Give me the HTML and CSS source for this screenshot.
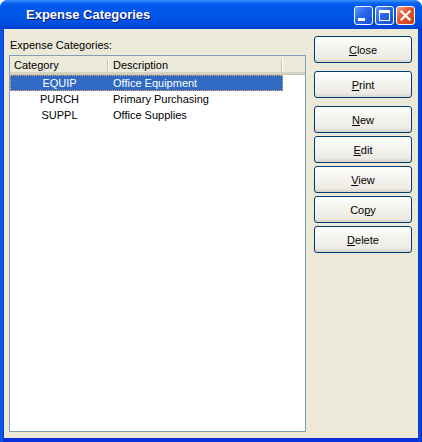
FILE: index.html
```html
<!DOCTYPE html>
<html>
<head>
<meta charset="utf-8">
<link rel="stylesheet" href="styles.css">
</head>
<body>
<div class="window">
  <div class="titlebar">
    <span class="title">Expense Categories</span>
    <div class="controls">
      <span class="tb blue"><svg width="17" height="17" viewBox="0 0 17 17"><rect x="3" y="11" width="7" height="3" fill="#fff"/></svg></span>
      <span class="tb blue"><svg width="17" height="17" viewBox="0 0 17 17"><rect x="3.5" y="3.5" width="10" height="10" fill="none" stroke="#fff" stroke-width="1"/><rect x="3" y="3" width="11" height="3" fill="#fff"/></svg></span>
      <span class="tb red"><svg width="17" height="17" viewBox="0 0 17 17"><path d="M4.5 4.5 L12.5 12.5 M12.5 4.5 L4.5 12.5" stroke="#fff" stroke-width="2.2" stroke-linecap="square"/></svg></span>
    </div>
  </div>
  <div class="client">
    <div class="left">
      <div class="label">Expense Categories:</div>
      <div class="list">
        <div class="header">
          <div class="hcell cat">Category</div>
          <div class="hcell desc">Description</div>
          <div class="hcell fill"></div>
        </div>
        <div class="row sel"><span class="c1">EQUIP</span><span class="c2">Office Equipment</span></div>
        <div class="row"><span class="c1">PURCH</span><span class="c2">Primary Purchasing</span></div>
        <div class="row"><span class="c1">SUPPL</span><span class="c2">Office Supplies</span></div>
      </div>
    </div>
    <div class="buttons">
      <button class="btn sep"><u>C</u>lose</button>
      <button class="btn sep"><u>P</u>rint</button>
      <button class="btn"><u>N</u>ew</button>
      <button class="btn"><u>E</u>dit</button>
      <button class="btn"><u>V</u>iew</button>
      <button class="btn">Co<u>p</u>y</button>
      <button class="btn"><u>D</u>elete</button>
    </div>
  </div>
</div>
</body>
</html>
```
FILE: styles.css
```css
html, body {
  margin: 0;
  padding: 0;
  background: #ffffff;
}
body {
  font-family: "Liberation Sans", Arial, sans-serif;
  font-size: 11px;
  color: #000;
}
.window {
  width: 422px;
  height: 442px;
  box-sizing: border-box;
  display: flex;
  flex-direction: column;
  background: linear-gradient(to right, #0831D9 0, #166AEE 1px, #0855DD 2px, #0831D9 4px, #0831D9 418px, #0855DD 420px, #001EA0 422px);
  border-radius: 8px 8px 0 0;
  overflow: hidden;
}
.titlebar {
  height: 29px;
  flex: none;
  display: flex;
  align-items: flex-start;
  background: linear-gradient(to bottom, #3D95FF 0, #0A66F2 3px, #0058EE 6px, #0055E5 15px, #0052E0 22px, #0048DA 26px, #0040D0 29px);
}
.title {
  margin-left: 26px;
  margin-top: 7px;
  font-weight: bold;
  font-size: 13px;
  line-height: 16px;
  color: #fff;
  text-shadow: 1px 1px 0 #0A1883;
}
.controls {
  margin-left: auto;
  margin-right: 7px;
  margin-top: 6px;
  display: flex;
  gap: 2px;
}
.tb {
  width: 19px;
  height: 19px;
  box-sizing: border-box;
  border: 1px solid #fff;
  border-radius: 3px;
  display: flex;
  align-items: center;
  justify-content: center;
}
.tb svg { display: block; }
.tb.blue {
  background: linear-gradient(135deg, #5A9AFF 0%, #2766E8 45%, #1B50D8 100%);
}
.tb.red {
  background: linear-gradient(135deg, #F3A48A 0%, #E35A2F 40%, #C8401C 100%);
}
.client {
  flex: 1;
  display: flex;
  margin: 0 4px 4px 4px;
  background: #ECE9D8;
}
.left {
  width: 302px;
  box-sizing: border-box;
  padding: 10px 0 6px 5px;
  display: flex;
  flex-direction: column;
}
.label {
  height: 13px;
  line-height: 13px;
  margin-bottom: 3px;
  padding-left: 1px;
}
.list {
  flex: 1;
  border: 1px solid #7F9DB9;
  background: #fff;
}
.header {
  display: flex;
  height: 19px;
  box-sizing: border-box;
  background: #EBEADB;
  border-bottom: 1px solid #CBC7B8;
  box-shadow: inset 0 -2px 0 #D6D2C2, inset 0 -1px 0 #E2DECD;
}
.hcell {
  height: 16px;
  line-height: 18px;
  padding-left: 4px;
  box-sizing: border-box;
  background-image: linear-gradient(to right, #C7C5B2 0, #C7C5B2 1px, #fff 1px, #fff 2px);
  background-size: 2px 13px;
  background-position: right 3px;
  background-repeat: no-repeat;
}
.hcell.cat { width: 99px; }
.hcell.desc { width: 174px; }
.hcell.fill { flex: 1; background-image: none; }
.row {
  display: flex;
  width: 273px;
  height: 16px;
  padding-top: 1px;
  line-height: 15px;
  box-sizing: border-box;
}
.row.sel {
  background: #316AC5;
  color: #fff;
  outline: 1px dotted #E8B060;
  outline-offset: -1px;
}
.c1 {
  width: 99px;
  text-align: center;
}
.c2 {
  padding-left: 4px;
}
.buttons {
  margin-left: 8px;
  padding-top: 7px;
  display: flex;
  flex-direction: column;
  gap: 3px;
}
.btn {
  width: 98px;
  height: 27px;
  box-sizing: border-box;
  border: 1px solid #003C74;
  border-radius: 3px;
  background: linear-gradient(to bottom, #FFFFFF 0%, #F5F4EF 40%, #ECEBE5 85%, #D8D2C6 100%);
  font-family: "Liberation Sans", Arial, sans-serif;
  font-size: 11px;
  color: #000;
  padding: 0;
  margin: 0;
}
.btn.sep {
  margin-bottom: 5px;
}
```
